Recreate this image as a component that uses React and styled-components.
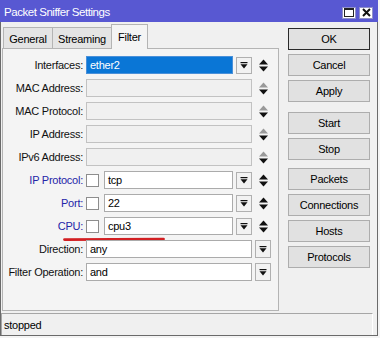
import React from 'react';
import styled, { createGlobalStyle } from 'styled-components';

const GlobalStyle = createGlobalStyle`
  body {
    margin: 0;
    background: #f4f4f4;
    font-family: "Liberation Sans", Arial, sans-serif;
  }
`;

const rows = [
  { label: 'Interfaces:', value: 'ether2', selected: true, drop: 'inline', arrows: 'on' },
  { label: 'MAC Address:', disabled: true, arrows: 'off' },
  { label: 'MAC Protocol:', disabled: true, arrows: 'off' },
  { label: 'IP Address:', disabled: true, arrows: 'off' },
  { label: 'IPv6 Address:', disabled: true, arrows: 'off' },
  { label: 'IP Protocol:', blue: true, check: true, value: 'tcp', drop: 'inline', arrows: 'on' },
  { label: 'Port:', blue: true, check: true, value: '22', drop: 'inline', arrows: 'on' },
  { label: 'CPU:', blue: true, check: true, value: 'cpu3', drop: 'inline', arrows: 'on', mark: true },
  { label: 'Direction:', value: 'any', drop: 'trailing' },
  { label: 'Filter Operation:', value: 'and', drop: 'trailing' },
];

const buttonGroups = [
  { space: 6, items: ['OK', 'Cancel', 'Apply'] },
  { space: 10, items: ['Start', 'Stop'] },
  { space: 8, items: ['Packets', 'Connections', 'Hosts', 'Protocols'] },
];

const DropIcon = () => (
  <svg width="8" height="7" viewBox="0 0 8 7">
    <rect x="0.5" y="0" width="7" height="1.2" fill="#111" />
    <polygon points="0.5,2.2 7.5,2.2 4,6.4" fill="#111" />
  </svg>
);

const UpDown = ({ dimUp }) => (
  <svg width="9" height="13" viewBox="0 0 9 13">
    <polygon points="0,5.5 9,5.5 4.5,0.5" fill={dimUp ? '#9a9a9a' : '#111'} />
    <polygon points="0,7.5 9,7.5 4.5,12.5" fill="#111" />
  </svg>
);

const FieldRow = ({ row }) => (
  <Row>
    <Label $blue={row.blue}>{row.label}</Label>
    <FieldArea>
      {row.check && <Check />}
      <TextBox $disabled={row.disabled} $selected={row.selected}>{row.value}</TextBox>
      {row.drop === 'inline' && <DropBtn><DropIcon /></DropBtn>}
    </FieldArea>
    <Trailing>
      {row.drop === 'trailing' && <DropBtn $wide><DropIcon /></DropBtn>}
      {row.arrows && <UpDown dimUp={row.arrows === 'off'} />}
    </Trailing>
    {row.mark && (
      <Mark width="102" height="5" viewBox="0 0 102 5">
        <path d="M1.5 2.6 Q 50 2.2 100.5 2.1" stroke="#d21f22" strokeWidth="2.8" strokeLinecap="round" fill="none" />
      </Mark>
    )}
  </Row>
);

export default function App() {
  return (
    <>
      <GlobalStyle />
      <Window>
        <TitleBar>
          <Title>Packet Sniffer Settings</Title>
          <TitleButtons>
            <TitleBtn>
              <svg width="10" height="9" viewBox="0 0 10 9">
                <rect x="0.5" y="0.5" width="9" height="8" fill="none" stroke="#222" />
                <rect x="0.5" y="0.5" width="9" height="1.5" fill="#222" />
              </svg>
            </TitleBtn>
            <TitleBtn>
              <svg width="9" height="9" viewBox="0 0 9 9">
                <path d="M1 1 L8 8 M8 1 L1 8" stroke="#111" strokeWidth="2" />
              </svg>
            </TitleBtn>
          </TitleButtons>
        </TitleBar>
        <Main>
          <LeftColumn>
            <Tabs>
              <Tab $w={50}>General</Tab>
              <Tab $w={60}>Streaming</Tab>
              <Tab $w={37} $active>Filter</Tab>
            </Tabs>
            <Panel>
              {rows.map((row) => (
                <FieldRow key={row.label} row={row} />
              ))}
            </Panel>
          </LeftColumn>
          <RightColumn>
            {buttonGroups.map((group) => (
              <ButtonGroup key={group.items[0]} $space={group.space}>
                {group.items.map((item) => (
                  <Button key={item} $default={item === 'OK'}>{item}</Button>
                ))}
              </ButtonGroup>
            ))}
          </RightColumn>
        </Main>
        <StatusBar>stopped</StatusBar>
      </Window>
    </>
  );
}

const Window = styled.div`
  width: 378px;
  height: 336px;
  box-sizing: border-box;
  border: 1px solid #6a6a6a;
  border-top: 0;
  background: #f0f0f0;
  display: flex;
  flex-direction: column;
  font-size: 11px;
  letter-spacing: -0.25px;
  color: #000;
`;

const TitleBar = styled.div`
  height: 22px;
  flex: none;
  margin: 0 -1px;
  background: #5858d2;
  display: flex;
  align-items: center;
  justify-content: space-between;
  padding: 0 5px 0 4px;
`;

const Title = styled.span`
  color: #fff;
  font-size: 11.5px;
  letter-spacing: -0.45px;
  margin-top: 1px;
`;

const TitleButtons = styled.div`
  display: flex;
  gap: 3px;
  margin-top: 3px;
`;

const TitleBtn = styled.div`
  width: 14px;
  height: 12px;
  box-sizing: border-box;
  background: #fff;
  border: 1px solid #9090c8;
  display: flex;
  align-items: center;
  justify-content: center;
`;

const Main = styled.div`
  flex: 1;
  display: flex;
  padding-left: 1px;
`;

const LeftColumn = styled.div`
  width: 277px;
  display: flex;
  flex-direction: column;
`;

const Tabs = styled.div`
  height: 26px;
  display: flex;
  align-items: flex-end;
  padding-left: 1px;
`;

const Tab = styled.div`
  width: ${(p) => p.$w}px;
  height: ${(p) => (p.$active ? 25 : 21)}px;
  box-sizing: border-box;
  border: 1px solid #b4b4b4;
  border-bottom: 0;
  margin-right: ${(p) => (p.$active ? 0 : -1)}px;
  margin-bottom: ${(p) => (p.$active ? -1 : 0)}px;
  background: ${(p) => (p.$active ? '#f4f4f4' : '#e4e4e4')};
  display: flex;
  align-items: center;
  justify-content: center;
  padding-top: ${(p) => (p.$active ? 0 : 2)}px;
  position: relative;
  z-index: ${(p) => (p.$active ? 1 : 0)};
`;

const Panel = styled.div`
  height: 263px;
  box-sizing: border-box;
  border: 1px solid #b4b4b4;
  background: #f4f4f4;
  padding: 7px 7px 0 0;
  display: flex;
  flex-direction: column;
  gap: 5px;
`;

const Row = styled.div`
  height: 18px;
  display: grid;
  grid-template-columns: 80px 1fr 16px;
  column-gap: 3px;
  align-items: center;
  position: relative;
`;

const Label = styled.span`
  text-align: right;
  white-space: nowrap;
  color: ${(p) => (p.$blue ? '#2424a8' : '#111')};
`;

const FieldArea = styled.div`
  display: flex;
  align-items: center;
  height: 18px;
`;

const Check = styled.div`
  width: 13px;
  height: 13px;
  flex: none;
  box-sizing: border-box;
  border: 1px solid #8d8d8d;
  background: #fff;
  margin-right: 5px;
`;

const TextBox = styled.div`
  flex: 1;
  height: 18px;
  box-sizing: border-box;
  border: 1px solid ${(p) => (p.$selected ? '#4a90d9' : p.$disabled ? '#c2c2c2' : '#ababab')};
  background: ${(p) => (p.$selected ? '#0a76d6' : p.$disabled ? '#f0f0f0' : '#fff')};
  color: ${(p) => (p.$selected ? '#fff' : '#000')};
  padding-left: 3px;
  line-height: 16px;
  white-space: nowrap;
`;

const DropBtn = styled.div`
  width: 16px;
  height: ${(p) => (p.$wide ? 18 : 17)}px;
  flex: none;
  box-sizing: border-box;
  margin-left: ${(p) => (p.$wide ? 0 : 3)}px;
  border: 1px solid #b0b0b0;
  background: #f2f2f2;
  display: flex;
  align-items: center;
  justify-content: center;
`;

const Trailing = styled.div`
  display: flex;
  align-items: center;
  justify-content: center;
  height: 18px;
`;

const Mark = styled.svg`
  position: absolute;
  left: 60px;
  top: 20px;
`;

const RightColumn = styled.div`
  width: 82px;
  margin-left: 9px;
  display: flex;
  flex-direction: column;
`;

const ButtonGroup = styled.div`
  display: flex;
  flex-direction: column;
  gap: 4px;
  margin-top: ${(p) => p.$space}px;
`;

const Button = styled.div`
  height: 22px;
  box-sizing: border-box;
  border: 1px solid ${(p) => (p.$default ? '#2a2a2a' : '#adadad')};
  background: #e1e1e1;
  display: flex;
  align-items: center;
  justify-content: center;
`;

const StatusBar = styled.div`
  height: 22px;
  flex: none;
  box-sizing: border-box;
  margin-right: 4px;
  border-top: 1px solid #a6a6a6;
  border-left: 1px solid #a6a6a6;
  border-right: 1px solid #fff;
  padding-left: 2px;
  display: flex;
  align-items: center;
`;
